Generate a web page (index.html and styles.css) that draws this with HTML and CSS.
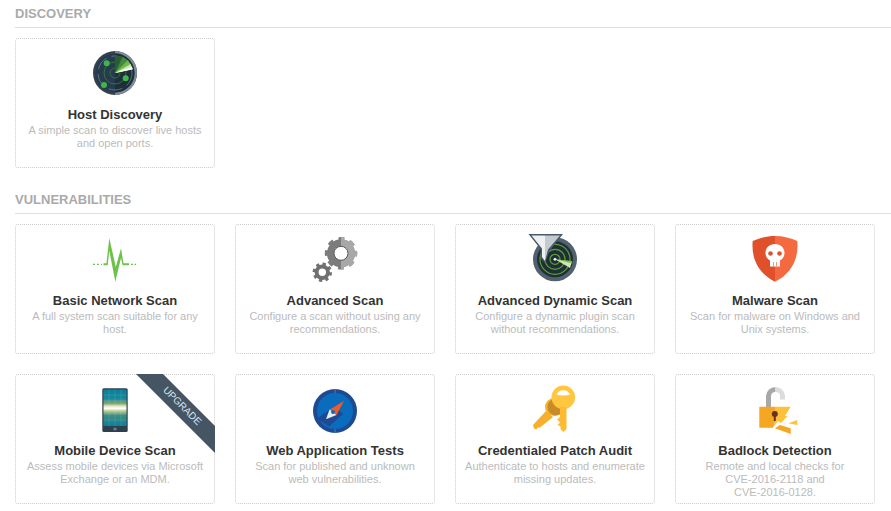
FILE: index.html
```html
<!DOCTYPE html>
<html lang="en">
<head>
    <meta charset="UTF-8">
    <title>Scan Templates</title>
    <link rel="stylesheet" href="styles.css">
</head>
<body>
    <section class="group">
        <h2>Discovery</h2>
        <div class="cards">
            <div class="card">
                <svg class="icon" viewBox="0 0 60 50">
                    <circle cx="30" cy="25" r="22" fill="#33414f"/>
                    <path d="M30 3a22 22 0 0 1 0 44z" fill="#7f8b97"/>
                    <circle cx="30" cy="25" r="19.500" fill="#263b4d"/>
                    <path d="M30 5.500a19.500 19.500 0 0 1 0 39z" fill="#1d2f3a"/>
                    <circle cx="30" cy="25" r="17" fill="none" stroke="#7f97a5" stroke-width=".6" stroke-dasharray="14 5"/>
                    <circle cx="30" cy="25" r="11" fill="none" stroke="#3f8a3c" stroke-width=".7"/>
                    <circle cx="30" cy="25" r="5" fill="none" stroke="#3f8a3c" stroke-width=".7"/>
                    <path d="M30 25V7L37.600 8.700 42.700 12.300 47.600 21.300z" fill="#2c5c34"/>
                    <path d="M30 25 37.600 8.700 42.700 12.300 47.600 21.300z" fill="#3f8a3c"/>
                    <path d="M30 25 42.700 12.300 45.600 16 47.600 21.300z" fill="#6cbb4a"/>
                    <path d="M30 25 45.600 16 47.600 21.300z" fill="#cfe5b0"/>
                    <path d="M30 25 47 18.800 47.600 21.300z" fill="#fff"/>
                    <circle cx="21.700" cy="15.300" r="3" fill="#3fb54a"/>
                    <circle cx="40.700" cy="30.300" r="3" fill="#3fb54a"/>
                    <circle cx="19" cy="37" r="3" fill="#3fb54a"/>
                </svg>
                <h3>Host Discovery</h3>
                <p>A simple scan to discover live hosts and open ports.</p>
            </div>
        </div>
    </section>

    <section class="group">
        <h2>Vulnerabilities</h2>
        <div class="cards">
            <div class="card">
                <svg class="icon" viewBox="0 0 60 50">
                    <path d="M8 30.300h2M12 30.300h2M16 30.300h1M46 30.300h2M49.500 30.300h1.500" stroke="#6cc24a" stroke-width="1.200" fill="none"/>
                    <path d="M18.500 29.300H21.500L24.300 4 30.800 33 36 14.300 38.500 29.300H44V31.300H37.600L36 24 30.300 47.700 26.300 27 24.300 17 22.700 31.300H18.500z" fill="#6cc24a"/>
                </svg>
                <h3>Basic Network Scan</h3>
                <p>A full system scan suitable for any host.</p>
            </div>
            <div class="card">
                <svg class="icon" viewBox="0 0 60 50">
                    <defs>
                        <clipPath id="gearRight"><rect x="36" y="0" width="24" height="50"/></clipPath>
                        <g id="bigGear" fill="none" stroke="currentColor">
                            <circle cx="36" cy="19.300" r="10.500" stroke-width="7"/>
                            <circle cx="36" cy="19.300" r="14.200" stroke-width="4" stroke-dasharray="5.600 5.550" stroke-dashoffset="2.800"/>
                        </g>
                    </defs>
                    <use href="#bigGear" color="#7c7c7c"/>
                    <use href="#bigGear" color="#a8a8a8" clip-path="url(#gearRight)"/>
                    <circle cx="36" cy="19.300" r="7" fill="#fff" stroke="#555" stroke-width="1"/>
                    <circle cx="17.300" cy="38.300" r="5.700" fill="none" stroke="#707070" stroke-width="4"/>
                    <circle cx="17.300" cy="38.300" r="8.200" fill="none" stroke="#707070" stroke-width="3" stroke-dasharray="3.200 3.240"/>
                </svg>
                <h3>Advanced Scan</h3>
                <p>Configure a scan without using any recommendations.</p>
            </div>
            <div class="card">
                <svg class="icon" viewBox="0 0 60 50">
                    <circle cx="30" cy="25.300" r="22" fill="#52616f"/>
                    <circle cx="30" cy="25.300" r="18" fill="#1f2f36"/>
                    <g fill="none" stroke="#5f9d3d" stroke-width="1.200">
                        <circle cx="30" cy="25.300" r="5"/>
                        <circle cx="30" cy="25.300" r="10"/>
                        <circle cx="30" cy="25.300" r="15"/>
                    </g>
                    <path d="M30 25.300 47 27.500 45 34z" fill="#cfe5b0"/>
                    <path d="M30 25.300 47 27 47.300 29.500z" fill="#7cc04f"/>
                    <circle cx="30" cy="25.300" r="1.400" fill="#fff"/>
                    <path d="M3.500 0H38L24.500 17 20 29 15.500 24V15z" fill="#4a5a68"/>
                    <path d="M6.500 1.500H20V27L17 23V14.500z" fill="#eef0f1"/>
                    <path d="M20 1.500H35L23 15.500 20 27z" fill="#c4cbd0"/>
                </svg>
                <h3>Advanced Dynamic Scan</h3>
                <p>Configure a dynamic plugin scan without recommendations.</p>
            </div>
            <div class="card">
                <svg class="icon" viewBox="0 0 60 50">
                    <path d="M30 2C22 2 14 4 7.700 7 6 25 14 40 30 47.700z" fill="#e0502a"/>
                    <path d="M30 2C38 2 46 4 52.300 7 54 25 46 40 30 47.700z" fill="#f4693f"/>
                    <path d="M30 10c5.500 0 9.500 3.800 9.500 9 0 3.500-1.700 6-4.500 7.500V32.500H25V26.500C22.200 25 20.500 22.500 20.500 19c0-5.200 4-9 9.500-9z" fill="#fff"/>
                    <circle cx="25.500" cy="19.500" r="2.300" fill="#e0502a"/>
                    <circle cx="34.500" cy="19.500" r="2.300" fill="#e0502a"/>
                    <path d="M28 28h1v4h-1zM31 28h1v4h-1z" fill="#e89a80"/>
                </svg>
                <h3>Malware Scan</h3>
                <p>Scan for malware on Windows and Unix systems.</p>
            </div>
            <div class="card">
                <div class="ribbon"><span>Upgrade</span></div>
                <svg class="icon" viewBox="0 0 60 50">
                    <defs>
                        <linearGradient id="phoneScreen" x1="0" y1="0" x2="0" y2="1">
                            <stop offset="0" stop-color="#0a7f9c"/>
                            <stop offset=".25" stop-color="#16899a"/>
                            <stop offset=".38" stop-color="#7ea36f"/>
                            <stop offset=".46" stop-color="#e6e8c0"/>
                            <stop offset=".52" stop-color="#fff"/>
                            <stop offset=".58" stop-color="#c7d49a"/>
                            <stop offset=".7" stop-color="#3f8f80"/>
                            <stop offset="1" stop-color="#0a7f9c"/>
                        </linearGradient>
                    </defs>
                    <rect x="17.300" y="4.300" width="25.400" height="43.700" rx="1.500" fill="#2f3f4d"/>
                    <rect x="18.500" y="5.500" width="23" height="36.500" fill="url(#phoneScreen)"/>
                    <path d="M24 5.500V42M30 5.500V42M36 5.500V42M18.500 11H41.500M18.500 17H41.500M18.500 30H41.500M18.500 36H41.500" stroke="#fff" stroke-opacity=".18" stroke-width=".6"/>
                    <rect x="28.500" y="43.700" width="3" height="2.600" fill="#6f7d89"/>
                </svg>
                <h3>Mobile Device Scan</h3>
                <p>Assess mobile devices via Microsoft Exchange or an MDM.</p>
            </div>
            <div class="card">
                <svg class="icon" viewBox="0 0 60 50">
                    <circle cx="30" cy="27" r="22" fill="#1d4a93"/>
                    <circle cx="30" cy="27" r="18" fill="#0a6cbd"/>
                    <path d="M30 5v4M30 45v4" stroke="#6f93c4" stroke-width=".7"/>
                    <path d="M12 34.500 30 22 38 30 24 42.500z" fill="#1d4a93"/>
                    <path d="M39 17 24.500 25.500 31.500 31z" fill="#ee5a2b"/>
                    <path d="M21 35.300 24.500 25.500 31.500 31z" fill="#e8ecef"/>
                    <circle cx="28" cy="28" r="2" fill="#0a6cbd"/>
                </svg>
                <h3>Web Application Tests</h3>
                <p>Scan for published and unknown web vulnerabilities.</p>
            </div>
            <div class="card">
                <svg class="icon" viewBox="0 0 60 50">
                    <circle cx="29" cy="23" r="9" fill="#f7b02a"/>
                    <path d="M21 27 28 33 15 43.500H12.500L11.500 45.500 9 44.500 8 41z" fill="#f7b02a"/>
                    <circle cx="31" cy="23" r="8.500" fill="#c98a2a"/>
                    <circle cx="38.300" cy="13.300" r="11.800" fill="#ffc640"/>
                    <path d="M31.500 10.500a7.500 7.500 0 0 1 13.600 0c-4 1.200-9.600 1.200-13.600 0z" fill="#fff"/>
                    <path d="M35 23H41.500V45L38.300 48 35.500 45V42.500L32.500 41 35 38.500 32 35.500 35 33z" fill="#fdbb33"/>
                </svg>
                <h3>Credentialed Patch Audit</h3>
                <p>Authenticate to hosts and enumerate missing updates.</p>
            </div>
            <div class="card">
                <svg class="icon" viewBox="0 0 60 50">
                    <path d="M23.500 24V12a7 7 0 0 1 7-6.500" fill="none" stroke="#a8a8a8" stroke-width="5"/>
                    <path d="M30.500 5.500a7 7 0 0 1 7 6.500V15.500" fill="none" stroke="#dcdcdc" stroke-width="5"/>
                    <path d="M14.300 22.700H30V38L28 43.700H14.300z" fill="#f5a623"/>
                    <path d="M30 22.700H45.700L40 32H42.500L36 39 33 37 28 43.700 30 38z" fill="#fdc13c"/>
                    <path d="M43.300 39.300 52.300 36V41z" fill="#fdc13c"/>
                    <path d="M30 44.300 35 41 45.700 44.300V50z" fill="#f5a623"/>
                    <circle cx="29.800" cy="30" r="3" fill="#6b2f1e"/>
                    <path d="M28.800 31H30.800V37H28.800z" fill="#6b2f1e"/>
                </svg>
                <h3>Badlock Detection</h3>
                <p>Remote and local checks for<br>CVE-2016-2118 and<br>CVE-2016-0128.</p>
            </div>
        </div>
    </section>
</body>
</html>
```

FILE: styles.css
```css
body {
    margin: 0;
    padding-left: 15px;
    font-family: "Liberation Sans", Arial, sans-serif;
    background-color: #fff;
    overflow: hidden;
}
.group {
    margin-bottom: 18px;
}
h2 {
    margin: 0 0 10px;
    height: 27px;
    line-height: 27px;
    font-size: 13px;
    font-weight: bold;
    color: #aaa;
    text-transform: uppercase;
    border-bottom: 1px solid #ddd;
}
.cards {
    display: grid;
    grid-template-columns: repeat(4, 200px);
    gap: 20px;
}
.card {
    position: relative;
    box-sizing: border-box;
    height: 130px;
    padding: 9px 8px 0;
    text-align: center;
    border: 1px dotted #ccc;
    border-radius: 3px;
}
.icon {
    display: block;
    width: 60px;
    height: 50px;
    margin: 0 auto;
}
h3 {
    margin: 9px 0 0;
    font-size: 13px;
    line-height: 16px;
    font-weight: bold;
    color: #333;
}
p {
    margin: 1px 0 0;
    font-size: 11px;
    line-height: 13px;
    color: #bbb;
}
.ribbon {
    position: absolute;
    top: -1px;
    right: -1px;
    width: 79px;
    height: 79px;
    background-color: #455564;
    clip-path: polygon(0 0, 27px 0, 100% 52px, 100% 100%);
}
.ribbon span {
    position: absolute;
    top: 26px;
    left: 17px;
    width: 58px;
    font-size: 10px;
    line-height: 12px;
    text-align: center;
    text-transform: uppercase;
    color: #dfe4e8;
    transform: rotate(45deg);
}
```
